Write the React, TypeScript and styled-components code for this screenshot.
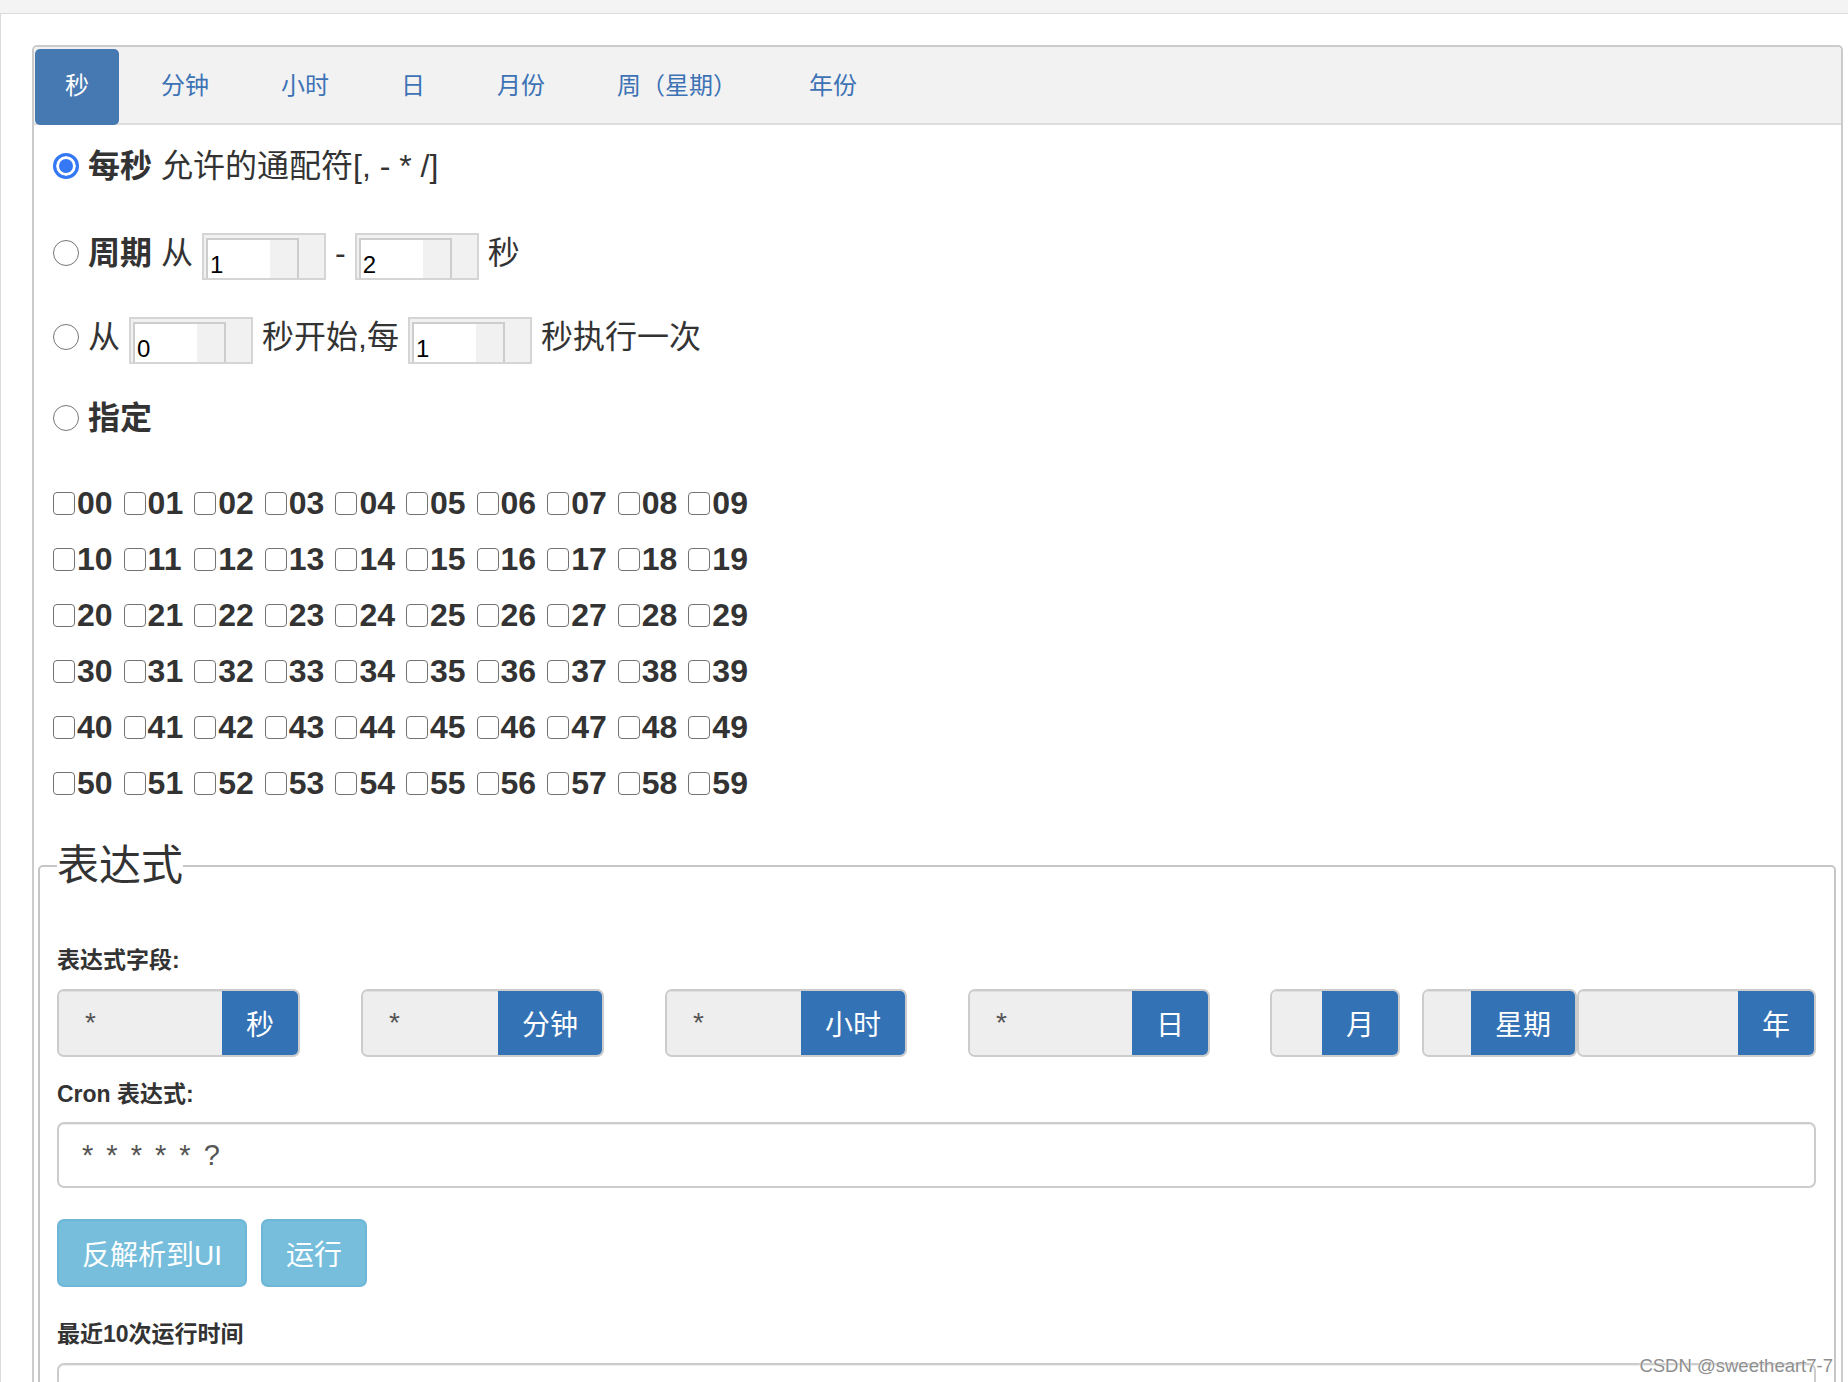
import React from 'react';
import styled, { createGlobalStyle } from 'styled-components';

const FONT = `"Liberation Sans", "Noto Sans CJK SC", Arial, sans-serif`;

const GlobalStyle = createGlobalStyle`
  html, body { margin: 0; padding: 0; background: #fff; }
  body { font-family: ${FONT}; color: #333; }
  *, *::before, *::after { box-sizing: border-box; }
`;

const Shell = styled.div`
  position: relative;
  height: 100vh;
  overflow: hidden;
  display: flex;
  flex-direction: column;
`;

const TopStrip = styled.div`
  flex: none;
  height: 14px;
  background: #f4f4f4;
  border-bottom: 1px solid #dcdcdc;
`;

const Main = styled.div`
  flex: 1;
  border-left: 1px solid #dadada;
  padding: 31px 5px 0 31px;
`;

const Panel = styled.div`
  min-height: 1500px;
  border: 2px solid #cbcbcb;
  border-bottom: none;
  border-radius: 5px 5px 0 0;
`;

const TabBar = styled.div`
  display: flex;
  gap: 12px;
  height: 78px;
  padding: 2px 0 0 1px;
  background: #f2f2f2;
  border-bottom: 2px solid #dedede;
  border-radius: 3px 3px 0 0;
`;

const Tab = styled.div<{ $active?: boolean }>`
  flex: none;
  height: 76px;
  padding: 0 30px 3px;
  display: flex;
  align-items: center;
  font: 24px/24px ${FONT};
  color: ${(p) => (p.$active ? '#ffffff' : '#3d72b5')};
  background: ${(p) => (p.$active ? '#4678b2' : 'transparent')};
  border-radius: 5px;
`;

const Options = styled.div`
  padding: 20px 0 0 19px;
`;

const Row = styled.div<{ $mt: number }>`
  display: flex;
  align-items: center;
  gap: 9px;
  min-height: 42px;
  margin-top: ${(p) => p.$mt}px;
  font: 32px/42px ${FONT};
  color: #333;
  white-space: nowrap;
`;

const Radio = styled.input.attrs({ type: 'radio', name: 'second' })`
  appearance: none;
  flex: none;
  width: 26px;
  height: 26px;
  margin: 0;
  border-radius: 50%;
  border: 1.5px solid #767676;
  background: #fff;
  &:checked {
    border: 3px solid #3478f6;
    background: #3478f6;
    box-shadow: inset 0 0 0 3px #fff;
  }
`;

const Strong = styled.b`
  font-weight: 700;
`;

const NumberBox = styled.span`
  flex: none;
  display: inline-flex;
  width: 124px;
  height: 47px;
  margin-top: 8px;
  padding: 3px 0 0 2px;
  border: 2px solid #d5d5d5;
  background: #f1f1f1;
`;

const NumberField = styled.input`
  width: 93px;
  height: 100%;
  margin: 0;
  padding: 12px 0 0 2px;
  border: 2px solid #cdcdcd;
  border-bottom: none;
  background: linear-gradient(to right, #fff 0, #fff 62px, #f1f1f1 62px);
  font: 24px/24px "Liberation Sans", Arial, sans-serif;
  color: #000;
  outline: none;
`;

const SecondGrid = styled.div`
  display: grid;
  grid-template-columns: repeat(10, 70.6px);
  margin-top: 36px;
`;

const SecondItem = styled.label`
  display: flex;
  align-items: center;
  height: 56px;
  font: bold 32px "Liberation Sans", Arial, sans-serif;
  color: #333;
`;

const Box = styled.input.attrs({ type: 'checkbox' })`
  appearance: none;
  flex: none;
  width: 22px;
  height: 23px;
  margin: 0 2px 0 0;
  border: 1.5px solid #737373;
  border-radius: 4px;
  background: #fff;
`;

const ExprFieldset = styled.fieldset`
  margin: 30px 5px 0 4px;
  padding: 0 18px 0 17px;
  border: 2px solid #c6c6c6;
  border-radius: 5px;
  min-width: 0;
`;

const Legend = styled.legend`
  padding: 0;
  font: 42px/50px ${FONT};
  color: #333;
`;

const FieldLabel = styled.div<{ $mt: number }>`
  margin-top: ${(p) => p.$mt}px;
  font: bold 23px/32px ${FONT};
  color: #333;
`;

const GroupRow = styled.div`
  display: flex;
  margin-top: 13px;
`;

const Group = styled.div<{ $ml: number }>`
  flex: none;
  display: flex;
  height: 68px;
  margin-left: ${(p) => p.$ml}px;
  border: 2px solid #cccccc;
  border-radius: 7px;
  overflow: hidden;
`;

const GroupField = styled.input<{ $w: number }>`
  flex: none;
  width: ${(p) => p.$w}px;
  margin: 0;
  padding: 0 0 0 26px;
  border: none;
  background: #eeeeee;
  box-shadow: inset 0 1px 1px rgba(0, 0, 0, 0.075);
  font: 28px "Liberation Sans", Arial, sans-serif;
  color: #555;
  outline: none;
`;

const Addon = styled.span`
  flex: none;
  display: flex;
  align-items: center;
  padding: 0 24px;
  background: #3472b6;
  color: #fff;
  font: 28px ${FONT};
`;

const CronInput = styled.input`
  display: block;
  width: 100%;
  height: 66px;
  margin: 12px 0 0;
  padding: 0 0 0 23px;
  border: 2px solid #cccccc;
  border-radius: 7px;
  box-shadow: inset 0 1px 1px rgba(0, 0, 0, 0.075);
  font: 29px "Liberation Sans", Arial, sans-serif;
  letter-spacing: 2.5px;
  color: #555;
  outline: none;
`;

const ActionRow = styled.div`
  display: flex;
  gap: 14px;
  margin-top: 31px;
`;

const InfoButton = styled.button`
  height: 68px;
  padding: 0 23px;
  border: 2px solid #6db6d5;
  border-radius: 7px;
  background: #76bedc;
  color: #fff;
  font: 28px ${FONT};
  cursor: pointer;
`;

const ResultBox = styled.textarea`
  display: block;
  width: 100%;
  height: 160px;
  margin-top: 13px;
  border: 2px solid #cccccc;
  border-radius: 7px;
  box-shadow: inset 0 1px 1px rgba(0, 0, 0, 0.075);
  resize: none;
  outline: none;
`;

const Watermark = styled.div`
  position: absolute;
  right: 15px;
  bottom: 5px;
  font: 18.5px/22px "Liberation Sans", Arial, sans-serif;
  color: #8e8e8e;
  text-shadow: 0 0 1px #fff, 0 0 2px #fff;
  pointer-events: none;
`;

const tabs = ['秒', '分钟', '小时', '日', '月份', '周（星期）', '年份'];

const groups = [
  { ml: 0, w: 163, v: '*', unit: '秒' },
  { ml: 61, w: 135, v: '*', unit: '分钟' },
  { ml: 61, w: 134, v: '*', unit: '小时' },
  { ml: 61, w: 162, v: '*', unit: '日' },
  { ml: 60, w: 50, v: '', unit: '月' },
  { ml: 22, w: 47, v: '', unit: '星期' },
  { ml: 0, w: 159, v: '', unit: '年' },
];

const seconds = Array.from({ length: 60 }, (_, i) => String(i).padStart(2, '0'));

export default function App() {
  return (
    <>
      <GlobalStyle />
      <Shell>
        <TopStrip />
        <Main>
          <Panel>
            <TabBar>
              {tabs.map((t, i) => (
                <Tab key={t} $active={i === 0}>
                  {t}
                </Tab>
              ))}
            </TabBar>
            <Options>
              <Row $mt={0}>
                <Radio defaultChecked />
                <Strong>每秒</Strong>
                <span>允许的通配符[, - * /]</span>
              </Row>
              <Row $mt={38}>
                <Radio />
                <Strong>周期</Strong>
                <span>从</span>
                <NumberBox>
                  <NumberField defaultValue="1" />
                </NumberBox>
                <span>-</span>
                <NumberBox>
                  <NumberField defaultValue="2" />
                </NumberBox>
                <span>秒</span>
              </Row>
              <Row $mt={29}>
                <Radio />
                <span>从</span>
                <NumberBox>
                  <NumberField defaultValue="0" />
                </NumberBox>
                <span>秒开始,每</span>
                <NumberBox>
                  <NumberField defaultValue="1" />
                </NumberBox>
                <span>秒执行一次</span>
              </Row>
              <Row $mt={33}>
                <Radio />
                <Strong>指定</Strong>
              </Row>
              <SecondGrid>
                {seconds.map((s) => (
                  <SecondItem key={s}>
                    <Box />
                    {s}
                  </SecondItem>
                ))}
              </SecondGrid>
            </Options>
            <ExprFieldset>
              <Legend>表达式</Legend>
              <FieldLabel $mt={53}>表达式字段:</FieldLabel>
              <GroupRow>
                {groups.map((g) => (
                  <Group key={g.unit} $ml={g.ml}>
                    <GroupField $w={g.w} readOnly value={g.v} />
                    <Addon>{g.unit}</Addon>
                  </Group>
                ))}
              </GroupRow>
              <FieldLabel $mt={21}>Cron 表达式:</FieldLabel>
              <CronInput readOnly value="* * * * * ?" />
              <ActionRow>
                <InfoButton>反解析到UI</InfoButton>
                <InfoButton>运行</InfoButton>
              </ActionRow>
              <FieldLabel $mt={31}>最近10次运行时间</FieldLabel>
              <ResultBox readOnly />
            </ExprFieldset>
          </Panel>
        </Main>
        <Watermark>CSDN @sweetheart7-7</Watermark>
      </Shell>
    </>
  );
}
